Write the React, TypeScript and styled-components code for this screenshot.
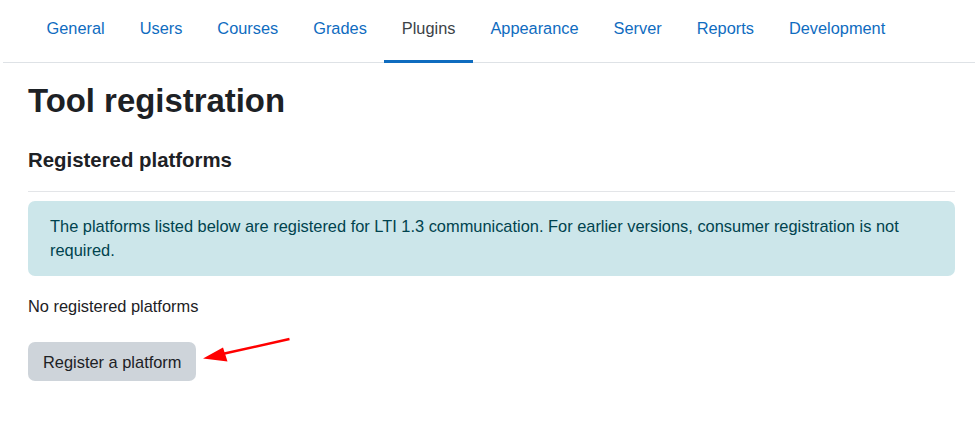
import React from "react";
import styled, { createGlobalStyle } from "styled-components";

const GlobalStyle = createGlobalStyle`
  html, body {
    margin: 0;
    padding: 0;
    background: #ffffff;
  }
  body {
    font-family: "Liberation Sans", Arial, sans-serif;
    font-size: 16.4px;
    line-height: 1.5;
    color: #1d2125;
  }
`;

const Page = styled.div`
  position: relative;
  padding-left: 3px;
  min-height: 444px;
`;

const TabBar = styled.ul`
  display: flex;
  list-style: none;
  margin: 0;
  padding: 0 0 0 26px;
  border-bottom: 1px solid #dee2e6;
`;

const Tab = styled.li<{ $active?: boolean }>`
  margin-bottom: -1px;
  padding: 16px 17.5px 20px;
  border-bottom: 3px solid ${(p) => (p.$active ? "#0f6cbf" : "transparent")};
  color: ${(p) => (p.$active ? "#3c4247" : "#0f6cbf")};
  font-size: 16.35px;
  line-height: 24px;
  white-space: nowrap;
  cursor: pointer;
`;

const Main = styled.main`
  padding: 19px 20px 0 25px;
`;

const Title = styled.h2`
  margin: 0 0 28px;
  font-size: 32.9px;
  font-weight: 700;
  line-height: 38px;
  color: #1d2125;
`;

const SectionTitle = styled.h3`
  margin: 0 0 19px;
  font-size: 20.4px;
  font-weight: 700;
  line-height: 24px;
  color: #1d2125;
`;

const Divider = styled.hr`
  margin: 0 0 9px;
  border: 0;
  border-top: 1px solid #e3e5e8;
`;

const InfoBox = styled.div`
  background: #cce6ea;
  color: #00434e;
  border-radius: 7px;
  padding: 13px 22px 14px;
  line-height: 24px;
`;

const EmptyText = styled.p`
  margin: 18px 0 24px;
  line-height: 24px;
`;

const Button = styled.button`
  font-family: inherit;
  font-size: 16.4px;
  line-height: 24px;
  color: #1d2125;
  background: #ced4da;
  border: 0;
  border-radius: 7px;
  padding: 7.5px 15px 7.5px 15px;
  cursor: pointer;
`;

const Annotation = styled.svg`
  position: absolute;
  left: 0;
  top: 0;
  pointer-events: none;
`;

const tabs = [
  "General",
  "Users",
  "Courses",
  "Grades",
  "Plugins",
  "Appearance",
  "Server",
  "Reports",
  "Development",
];

export default function App() {
  return (
    <Page>
      <GlobalStyle />
      <TabBar>
        {tabs.map((t) => (
          <Tab key={t} $active={t === "Plugins"}>
            {t}
          </Tab>
        ))}
      </TabBar>
      <Main>
        <Title>Tool registration</Title>
        <SectionTitle>Registered platforms</SectionTitle>
        <Divider />
        <InfoBox>
          The platforms listed below are registered for LTI 1.3 communication. For earlier
          versions, consumer registration is not required.
        </InfoBox>
        <EmptyText>No registered platforms</EmptyText>
        <Button>Register a platform</Button>
      </Main>
      <Annotation width="975" height="444" viewBox="0 0 975 444">
        <line x1="289.5" y1="339" x2="220" y2="354.5" stroke="#ff0000" strokeWidth="2.5" />
        <polygon points="203,358.5 223,347.5 227.5,361.5" fill="#ff0000" />
      </Annotation>
    </Page>
  );
}
